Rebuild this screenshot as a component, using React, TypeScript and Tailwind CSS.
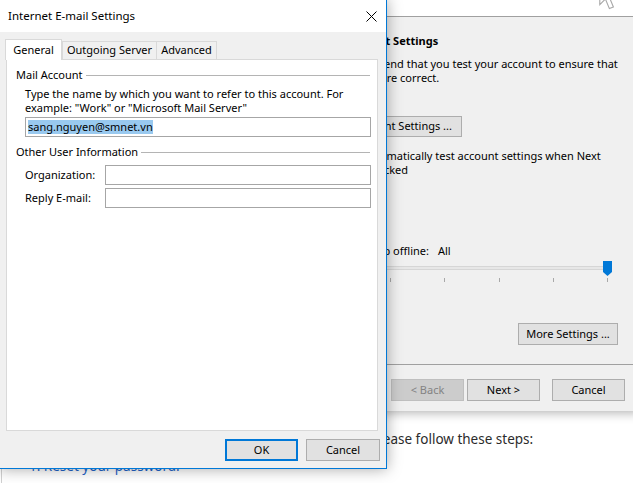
import React from "react";

const font = { fontFamily: '"Noto Sans", "Segoe UI", sans-serif' };

const ticks = Array.from({ length: 6 });

const BackWindow = () => {
  return (
    <div className="absolute left-[300px] top-0 z-10 flex h-[411px] w-[340px] flex-col bg-[#f0f0f0] text-[11px] text-black shadow-[0_2px_10px_rgba(0,0,0,0.3)]">
      <div className="relative h-[17px] shrink-0 border-b border-[#a0a0a0] bg-white">
        <svg
          className="absolute left-[299px] top-[-21px]"
          width="20"
          height="32"
          viewBox="0 0 12.5 20">
          <path
            d="M0.5 0.5 L0.5 16 L4 12.5 L6.5 18.5 L9 17.5 L6.5 11.5 L11.5 11.5 Z"
            fill="#ffffff"
            stroke="#a8a8a8"
            strokeWidth="0.7"
          />
        </svg>
      </div>

      <div className="flex flex-1 flex-col">
        <h3 className="mt-[17px] pl-[20px] font-bold leading-[14px]">Test Account Settings</h3>
        <p className="mt-[9px] pl-[22px] leading-[14px]">
          We recommend that you test your account to ensure that
          <br />
          the entries are correct.
        </p>
        <button className="ml-[20px] mt-[31px] flex h-[21px] w-[142px] items-center justify-center border border-[#adadad] bg-[#e1e1e1]">
          Test Account Settings ...
        </button>
        <div className="ml-[45px] mt-[12px] flex items-start">
          <span className="mt-[1px] h-[13px] w-[13px] shrink-0 border border-[#333] bg-white"></span>
          <span className="ml-[4px] leading-[13.5px]">
            Automatically test account settings when Next
            <br />
            is clicked
          </span>
        </div>
        <div className="mt-[68px] pl-[27px] leading-[14px]">
          Mail to keep offline:<span className="ml-[9px]">All</span>
        </div>
        <div className="relative ml-[32px] mt-[8px] w-[280px]">
          <div className="h-[4px] border border-[#d6d6d6] bg-[#e7e7e7]"></div>
          <svg className="absolute left-[271px] top-[-5px]" width="9" height="15" viewBox="0 0 9 15">
            <polygon points="0,0 9,0 9,11 4.5,15 0,11" fill="#0078d7" />
          </svg>
          <div className="mt-[8px] flex justify-between px-[4px]">
            {ticks.map((_, i) => (
              <span key={i} className="h-[4px] w-px bg-[#a8a8a8]"></span>
            ))}
          </div>
        </div>
        <button className="mr-[22px] mt-[41px] flex h-[22px] w-[100px] items-center justify-center self-end border border-[#adadad] bg-[#e1e1e1]">
          More Settings ...
        </button>
      </div>

      <div className="flex h-[47px] shrink-0 border-t border-[#a0a0a0] pl-[91px] pt-[14px]">
        <button className="flex h-[22px] w-[73px] items-center justify-center border border-[#bfbfbf] bg-[#cccccc] text-[#838383]">
          &lt; Back
        </button>
        <button className="ml-[3px] flex h-[22px] w-[73px] items-center justify-center border border-[#adadad] bg-[#e1e1e1]">
          Next &gt;
        </button>
        <button className="ml-[12px] flex h-[22px] w-[73px] items-center justify-center border border-[#adadad] bg-[#e1e1e1]">
          Cancel
        </button>
      </div>
    </div>
  );
};

const SettingsDialog = () => {
  return (
    <div className="absolute left-[-1px] top-[-1px] z-20 flex h-[470px] w-[388px] flex-col border border-[#0078d7] bg-[#f0f0f0] text-[11px] text-black shadow-[0_0_14px_rgba(0,0,0,0.35)]">
      <div className="flex h-[32px] shrink-0 items-center justify-between bg-white pl-[8px] pr-[9px]">
        <span className="text-[11.5px]">Internet E-mail Settings</span>
        <svg width="11" height="11" viewBox="0 0 11 11">
          <path d="M0.5 0.5 L10.5 10.5 M10.5 0.5 L0.5 10.5" stroke="#000" strokeWidth="1" />
        </svg>
      </div>

      <div className="flex flex-1 flex-col pl-[5px]">
        <div className="mt-[7px] flex h-[20px] items-end">
          <div className="relative z-10 -mb-px flex h-[21px] w-[57px] items-center justify-center border-l border-r border-t border-[#d9d9d9] bg-white">
            General
          </div>
          <div className="flex h-[18px] w-[95px] items-center justify-center border-l border-r border-t border-[#d9d9d9]">
            Outgoing Server
          </div>
          <div className="flex h-[18px] w-[60px] items-center justify-center border-r border-t border-[#d9d9d9]">
            Advanced
          </div>
        </div>

        <div className="ml-[1px] h-[372px] w-[372px] border border-[#d9d9d9] bg-white">
          <div className="mt-[8px] flex items-center pl-[9px] pr-[7px] leading-[14px]">
            <span>Mail Account</span>
            <span className="ml-[3px] h-px flex-1 bg-[#b4b4b4]"></span>
          </div>
          <p className="mt-[5px] pl-[18px] leading-[13.5px]">
            Type the name by which you want to refer to this account. For
            <br />
            example: "Work" or "Microsoft Mail Server"
          </p>
          <div className="ml-[18px] mr-[6px] mt-[3px] flex h-[20px] items-center border border-[#a6a6a6] pl-[2px]">
            <span className="bg-[#99c9ef] leading-[14px]">sang.nguyen@smnet.vn</span>
          </div>

          <div className="mt-[8px] flex items-center pl-[9px] pr-[7px] leading-[14px]">
            <span>Other User Information</span>
            <span className="ml-[3px] h-px flex-1 bg-[#b4b4b4]"></span>
          </div>
          <div className="mt-[6px] flex items-center pl-[18px] pr-[6px]">
            <span className="w-[80px]">Organization:</span>
            <span className="h-[20px] flex-1 border border-[#a6a6a6]"></span>
          </div>
          <div className="mt-[3px] flex items-center pl-[18px] pr-[6px]">
            <span className="w-[80px]">Reply E-mail:</span>
            <span className="h-[20px] flex-1 border border-[#a6a6a6]"></span>
          </div>
        </div>

        <div className="mt-[8px] flex justify-end gap-[8px] pr-[6px]">
          <button className="flex h-[22px] w-[73px] items-center justify-center border-2 border-[#0078d7] bg-[#e1e1e1]">
            OK
          </button>
          <button className="flex h-[22px] w-[74px] items-center justify-center border border-[#adadad] bg-[#e1e1e1]">
            Cancel
          </button>
        </div>
      </div>
    </div>
  );
};

export default function App() {
  return (
    <div className="relative h-[483px] w-[633px] overflow-hidden bg-white" style={font}>
      <div className="ml-[1px] h-full border-l border-[#d0d0d0] pl-[27px] pt-[428px] text-[13.5px]">
        <p className="leading-[22px] text-[#2b2b2b]">
          If you have forgotten the password for your mail box, please follow these steps:
        </p>
        <p className="mt-[5px] leading-[22px] text-[#1e64c8]">1. Reset your password.</p>
      </div>
      <BackWindow />
      <SettingsDialog />
    </div>
  );
}
